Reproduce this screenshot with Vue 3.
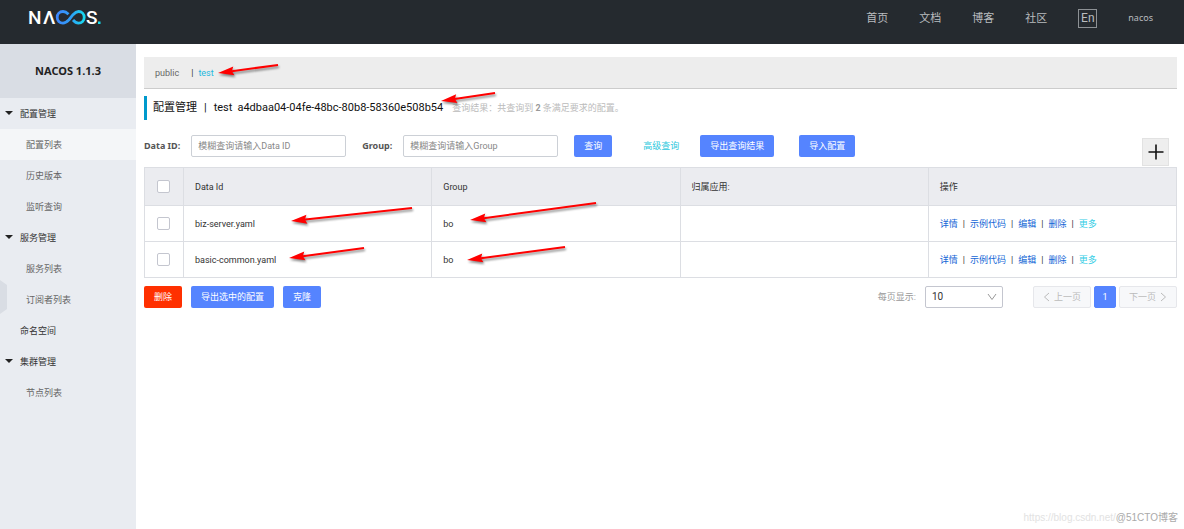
<script setup>
import { ref } from 'vue'

const navLinks = ['首页', '文档', '博客', '社区']

const menu = [
  { label: '配置管理', level: 'group', open: true },
  { label: '配置列表', level: 'child', active: true },
  { label: '历史版本', level: 'child' },
  { label: '监听查询', level: 'child' },
  { label: '服务管理', level: 'group', open: true },
  { label: '服务列表', level: 'child' },
  { label: '订阅者列表', level: 'child' },
  { label: '命名空间', level: 'group' },
  { label: '集群管理', level: 'group', open: true },
  { label: '节点列表', level: 'child' },
]

const rows = [
  { dataId: 'biz-server.yaml', group: 'bo' },
  { dataId: 'basic-common.yaml', group: 'bo' },
]

const actions = ['详情', '示例代码', '编辑', '删除']

const dataId = ref('')
const group = ref('')
const pageSize = ref('10')

// Annotation arrows: tip and tail points.
const arrows = [
  [218, 73, 278, 65],
  [441, 101, 495, 93],
  [291, 221, 412, 208],
  [289, 258, 364, 248],
  [470, 220, 596, 203],
  [467, 260, 565, 247],
].map(([x, y, tx, ty]) => ({
  x,
  y,
  length: Math.hypot(tx - x, ty - y),
  angle: (Math.atan2(ty - y, tx - x) * 180) / Math.PI,
}))
</script>

<template>
  <div class="page">
    <header class="topbar">
      <a class="logo" href="#" aria-label="NACOS">
        <svg width="76" height="32" viewBox="0 -6 76 32">
          <defs>
            <linearGradient id="loop" x1="28" y1="0" x2="57" y2="0" gradientUnits="userSpaceOnUse">
              <stop offset="0" stop-color="#3f86ff" />
              <stop offset="0.5" stop-color="#2f9df5" />
              <stop offset="1" stop-color="#16dcee" />
            </linearGradient>
          </defs>
          <text x="0" y="16" class="logo-text">N</text>
          <text x="15" y="16" class="logo-text">Λ</text>
          <path
            d="M40.5 6.300 C38.500 4.300 36.900 3.500 35 3.500 C31.500 3.500 29.200 6 29.200 9.300 C29.200 12.600 31.500 15.100 35 15.100 C37.500 15.100 39.200 13.500 41 11.700 L45 6.700 C46.700 4.800 48.300 3.500 50.500 3.500 C53.800 3.500 56.200 6 56.200 9.300 C56.200 12.600 53.800 15.100 50.500 15.100 C48.300 15.100 46.700 14 45 12"
            fill="none"
            stroke="url(#loop)"
            stroke-width="2.800"
          />
          <text x="58" y="16" class="logo-text">S</text>
          <rect x="70" y="13.500" width="2.500" height="2.500" fill="#16dcee" />
        </svg>
      </a>
      <nav class="nav">
        <a v-for="link in navLinks" :key="link" href="#">{{ link }}</a>
        <button class="lang" type="button">En</button>
        <a class="user" href="#">nacos</a>
      </nav>
    </header>

    <div class="body">
      <aside class="sidebar">
        <h1 class="version">NACOS 1.1.3</h1>
        <ul class="menu">
          <li v-for="item in menu" :key="item.label">
            <a href="#" class="menu-item" :class="[item.level, { active: item.active, open: item.open }]">{{ item.label }}</a>
          </li>
        </ul>
        <svg class="handle" width="7" height="34" viewBox="0 0 7 34">
          <path d="M0 0 L7 5 V29 L0 34 Z" fill="#d9dde4" />
        </svg>
      </aside>

      <main class="main">
        <div class="namespaces">
          <a href="#">public</a>
          <span class="bar">|</span>
          <a href="#" class="current">test</a>
        </div>

        <div class="heading">
          <h2>配置管理<span class="sep">|</span>test<span class="ns-id">a4dbaa04-04fe-48bc-80b8-58360e508b54</span></h2>
          <p>查询结果：共查询到 <strong>2</strong> 条满足要求的配置。</p>
        </div>

        <form class="search" @submit.prevent>
          <label for="data-id">Data ID:</label>
          <input id="data-id" v-model="dataId" class="field" type="text" placeholder="模糊查询请输入Data ID" />
          <label for="group">Group:</label>
          <input id="group" v-model="group" class="field" type="text" placeholder="模糊查询请输入Group" />
          <button class="btn" type="submit">查询</button>
          <a class="advanced" href="#">高级查询</a>
          <button class="btn" type="button">导出查询结果</button>
          <button class="btn import" type="button">导入配置</button>
          <button class="add" type="button" aria-label="新建配置">
            <svg width="16" height="16" viewBox="0 0 16 16">
              <path d="M8 0.500 V15.500 M0.500 8 H15.500" stroke="#111" stroke-width="1.6" fill="none" />
            </svg>
          </button>
        </form>

        <table class="configs">
          <thead>
            <tr>
              <th class="check"><input type="checkbox" aria-label="全选" /></th>
              <th>Data Id</th>
              <th>Group</th>
              <th>归属应用:</th>
              <th>操作</th>
            </tr>
          </thead>
          <tbody>
            <tr v-for="row in rows" :key="row.dataId">
              <td class="check"><input type="checkbox" :aria-label="row.dataId" /></td>
              <td>{{ row.dataId }}</td>
              <td>{{ row.group }}</td>
              <td></td>
              <td>
                <div class="actions">
                  <template v-for="action in actions" :key="action">
                    <a href="#">{{ action }}</a><span>|</span>
                  </template>
                  <a href="#" class="more">更多</a>
                </div>
              </td>
            </tr>
          </tbody>
        </table>

        <div class="footer">
          <button class="btn danger" type="button">删除</button>
          <button class="btn" type="button">导出选中的配置</button>
          <button class="btn" type="button">克隆</button>
          <label class="size-label" for="page-size">每页显示:</label>
          <div class="select">
            <select id="page-size" v-model="pageSize">
              <option>10</option>
              <option>20</option>
              <option>30</option>
            </select>
            <svg width="10" height="8" viewBox="0 0 10 8">
              <path d="M1 1 L5 6.500 L9 1" fill="none" stroke="#999" />
            </svg>
          </div>
          <div class="pager">
            <button class="page-btn" type="button" disabled>
              <svg width="7" height="10" viewBox="0 0 7 10"><path d="M6 1 L1.500 5 L6 9" fill="none" stroke="#bbb" /></svg>
              上一页
            </button>
            <button class="page-btn selected" type="button">1</button>
            <button class="page-btn" type="button" disabled>
              下一页
              <svg width="7" height="10" viewBox="0 0 7 10"><path d="M1 1 L5.500 5 L1 9" fill="none" stroke="#bbb" /></svg>
            </button>
          </div>
        </div>
      </main>
    </div>

    <svg class="arrows" width="1184" height="529" viewBox="0 0 1184 529">
      <g v-for="(a, i) in arrows" :key="i" :transform="`translate(${a.x} ${a.y}) rotate(${a.angle})`">
        <path :d="`M12 0 H${a.length}`" stroke="#f00" stroke-width="2" />
        <path d="M0 0 L16 -4.500 L14 0 L16 4.500 Z" fill="#f00" />
      </g>
    </svg>

    <div class="watermark"><span>https://blog.csdn.net/</span><span class="site">@51CTO博客</span></div>
  </div>
</template>

<style>
body {
  margin: 0;
  background: #fff;
}
</style>

<style scoped>
.page {
  position: relative;
  display: flex;
  flex-direction: column;
  min-height: 100vh;
  overflow: hidden;
  font-family: Roboto, 'Noto Sans CJK SC', sans-serif;
  font-size: 9px;
  line-height: 14px;
  color: #333;
}
.page * {
  box-sizing: border-box;
}
a {
  color: inherit;
  text-decoration: none;
}
button,
input,
select {
  margin: 0;
  font: inherit;
  color: inherit;
}

.topbar {
  display: flex;
  justify-content: space-between;
  align-items: flex-start;
  height: 44px;
  padding: 2px 31px 0 28px;
  background: #252a2f;
}
.logo svg {
  display: block;
}
.logo-text {
  font-family: Roboto, sans-serif;
  font-size: 19px;
  font-weight: 500;
  fill: #fff;
}
.nav {
  display: flex;
  align-items: center;
  gap: 31px;
  height: 32px;
  font-family: 'Noto Sans', 'Noto Sans CJK SC', sans-serif;
  font-size: 11px;
  color: #b9bcbf;
}
.lang {
  width: 19px;
  height: 19px;
  padding: 0;
  border: 1px solid #8d9195;
  background: none;
  font-family: Roboto, sans-serif;
  font-size: 12px;
  line-height: 17px;
}
.user {
  font-size: 9px;
}

.body {
  display: flex;
  flex: 1;
}
.sidebar {
  position: relative;
  flex: none;
  width: 136px;
  background: #e9ecf1;
  font-family: 'Noto Sans', 'Noto Sans CJK SC', sans-serif;
}
.version {
  margin: 0;
  background: #d9dde4;
  font-size: 11px;
  line-height: 54px;
  text-align: center;
  color: #222;
}
.menu {
  margin: 0;
  padding: 0;
  list-style: none;
}
.menu-item {
  display: block;
  position: relative;
  padding-left: 20px;
  line-height: 31px;
}
.child {
  padding-left: 26px;
  color: #666;
}
.active {
  background: #f4f6f8;
}
.open::before {
  content: '';
  position: absolute;
  left: 5px;
  top: 13px;
  border: 4px solid transparent;
  border-top-color: #222;
  border-bottom: 0;
}
.handle {
  position: absolute;
  left: 0;
  top: 236px;
}

.main {
  flex: 1;
  min-width: 0;
  padding: 13px 7px 0 8px;
}
.namespaces {
  display: flex;
  align-items: center;
  height: 32px;
  padding-left: 11px;
  border-bottom: 1px solid #ccc;
  background: #ededed;
  color: #666;
}
.bar {
  margin: 0 5px 0 12px;
  color: #333;
}
.current {
  color: #22b8dd;
}
.heading {
  display: flex;
  align-items: center;
  height: 24px;
  margin: 7px 0 15px;
  padding-left: 6px;
  border-left: 3px solid #09c;
}
.heading h2 {
  margin: 0;
  font-size: 11px;
  font-weight: 400;
  color: #111;
}
.sep {
  margin: 0 7px;
}
.ns-id {
  margin-left: 5px;
}
.heading p {
  margin: 0 0 0 9px;
  color: #bbb;
}
.heading strong {
  color: #999;
}

.search {
  display: flex;
  align-items: flex-start;
  height: 31px;
}
.search label {
  font-family: 'Noto Sans', sans-serif;
  font-weight: 700;
  line-height: 22px;
  color: #555;
}
.field {
  width: 155px;
  height: 22px;
  margin: 0 16px 0 11px;
  padding: 0 6px;
  border: 1px solid #ccd0d6;
  border-radius: 2px;
  background: #fff;
}
.field::placeholder {
  color: #888;
}
.btn {
  height: 22px;
  padding: 0 10px;
  border: 0;
  border-radius: 2px;
  background: #5584ff;
  line-height: 22px;
  color: #fff;
}
.advanced {
  margin: 0 21px 0 31px;
  line-height: 22px;
  color: #2bc8dd;
}
.import {
  margin-left: 25px;
}
.add {
  display: grid;
  place-items: center;
  align-self: flex-end;
  width: 27px;
  height: 28px;
  margin: 0 8px 0 auto;
  padding: 0;
  border: 1px solid #e2e2e2;
  background: #eee;
}

.configs {
  width: 100%;
  margin-top: 1px;
  border: 1px solid #dcdee3;
  border-collapse: collapse;
  table-layout: fixed;
}
.configs th,
.configs td {
  height: 36px;
  padding: 0 11px;
  border: 1px solid #dcdee3;
  text-align: left;
  font-weight: 400;
}
.configs th {
  height: 38px;
  background: #ebecf0;
}
.configs .check {
  width: 39px;
  padding: 0 12px;
}
.check input {
  display: block;
  appearance: none;
  width: 13px;
  height: 13px;
  border: 1px solid #c4c6cf;
  border-radius: 2px;
  background: #fff;
}
.actions {
  display: flex;
  gap: 5px;
  color: #333;
}
.actions a {
  color: #1366d6;
}
.actions .more {
  color: #33cde5;
}

.footer {
  display: flex;
  align-items: center;
  gap: 9px;
  margin-top: 8px;
}
.danger {
  background: #ff3000;
}
.size-label {
  margin-left: auto;
  color: #999;
}
.select {
  position: relative;
  width: 78px;
}
.select select {
  display: block;
  appearance: none;
  width: 100%;
  height: 22px;
  padding: 0 6px;
  border: 1px solid #c4c6cf;
  border-radius: 2px;
  background: #fff;
  font-size: 10px;
}
.select svg {
  position: absolute;
  right: 6px;
  top: 7px;
  pointer-events: none;
}
.pager {
  display: flex;
  gap: 3px;
  margin-left: 21px;
}
.page-btn {
  display: flex;
  align-items: center;
  justify-content: center;
  gap: 4px;
  min-width: 22px;
  height: 22px;
  padding: 0 9px;
  border: 1px solid #e6e7eb;
  border-radius: 2px;
  background: #f7f8fa;
  color: #bbb;
}
.page-btn.selected {
  padding: 0;
  border-color: #5584ff;
  background: #5584ff;
  color: #fff;
}

.arrows {
  position: absolute;
  left: 0;
  top: 0;
  pointer-events: none;
  filter: drop-shadow(1px 2px 1px rgba(0, 0, 0, 0.45));
}
.watermark {
  position: absolute;
  right: 6px;
  bottom: 4px;
  font-family: 'Liberation Sans', 'Noto Sans CJK SC', sans-serif;
  font-size: 10px;
  color: #e2e2e2;
}
.site {
  color: #aaa;
}
</style>
